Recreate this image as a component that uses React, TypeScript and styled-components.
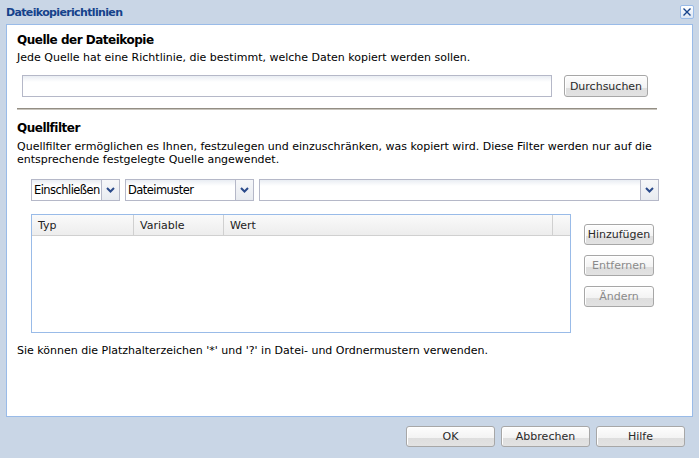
import React from 'react';
import styled, { createGlobalStyle } from 'styled-components';

const GlobalStyle = createGlobalStyle`
  html, body {
    margin: 0;
    padding: 0;
  }
  body {
    font-family: "DejaVu Sans", Tahoma, sans-serif;
    font-size: 11px;
    color: #000;
  }
`;

const Window = styled.div`
  width: 699px;
  height: 458px;
  background: #c9d6e6;
  display: flex;
  flex-direction: column;
  box-sizing: border-box;
  overflow: hidden;
`;

const TitleBar = styled.div`
  height: 24px;
  display: flex;
  align-items: center;
  justify-content: space-between;
  padding: 0 5px 0 6px;
  flex-shrink: 0;
`;

const Title = styled.span`
  font-weight: bold;
  font-size: 11px;
  letter-spacing: -0.65px;
  color: #15428b;
`;

const CloseButton = styled.div`
  width: 14px;
  height: 14px;
  box-sizing: border-box;
  border: 1px solid #99bbe8;
  border-radius: 2px;
  background: linear-gradient(#ffffff, #dbe5f3);
  display: flex;
  align-items: center;
  justify-content: center;
`;

const Panel = styled.div`
  margin: 0 6px;
  height: 393px;
  box-sizing: border-box;
  flex-shrink: 0;
  border: 1px solid #99bbe8;
  background: #fff;
  padding: 7px 10px 0 10px;
`;

const Heading = styled.div<{ $top?: number }>`
  font-size: 12px;
  font-weight: bold;
  letter-spacing: -0.5px;
  line-height: 16px;
  margin-top: ${p => p.$top ?? 0}px;
`;

const Text = styled.p<{ $top?: number; $lh?: number }>`
  margin: ${p => p.$top ?? 0}px 0 0 0;
  line-height: ${p => p.$lh ?? 14}px;
`;

const SourceRow = styled.div`
  display: flex;
  align-items: center;
  gap: 12px;
  margin-top: 10px;
  padding-left: 5px;
`;

const TextField = styled.input<{ $width: number }>`
  width: ${p => p.$width}px;
  height: 22px;
  box-sizing: border-box;
  border: 1px solid #b5b8c8;
  background: linear-gradient(#e9edf3, #ffffff 6px);
  margin: 0;
  padding: 0 3px;
  font: inherit;
  outline: none;
`;

const Button = styled.button<{ $width: number; $height?: number }>`
  width: ${p => p.$width}px;
  height: ${p => p.$height ?? 21}px;
  box-sizing: border-box;
  border: 1px solid #a7a7a7;
  border-radius: 3px;
  background: linear-gradient(#fdfdfd 0%, #f3f3f3 58%, #dedede 60%, #e2e2e2 100%);
  font-family: "DejaVu Sans", Tahoma, sans-serif;
  font-size: 11px;
  font-weight: normal;
  color: #2a2a2a;
  padding: 0;
  margin: 0;
  box-shadow: inset 1px 1px 0 #ffffff;

  &:disabled {
    color: #8a8a8a;
  }
`;

const Divider = styled.div`
  width: 640px;
  height: 2px;
  margin-top: 11px;
  border-top: 1px solid #938e84;
  border-bottom: 1px solid #c8c4bc;
  box-sizing: border-box;
`;

const FilterRow = styled.div`
  display: flex;
  gap: 5px;
  margin-top: 13px;
  padding-left: 14px;
`;

const Combo = styled.div<{ $width: number }>`
  width: ${p => p.$width}px;
  height: 22px;
  display: flex;
  box-sizing: border-box;
`;

const ComboValue = styled.div`
  flex: 1;
  min-width: 0;
  border: 1px solid #b5b8c8;
  border-right: none;
  background: linear-gradient(#e9edf3, #ffffff 6px);
  display: flex;
  align-items: center;
  padding-left: 2px;
  font-size: 11.5px;
  letter-spacing: -0.55px;
  white-space: nowrap;
  overflow: hidden;
`;

const Trigger = styled.div`
  width: 17px;
  flex-shrink: 0;
  border: 1px solid #b5b8c8;
  background: linear-gradient(#f6f7f9, #e8ebf0);
  display: flex;
  align-items: center;
  justify-content: center;
`;

const TableRow = styled.div`
  display: flex;
  align-items: flex-start;
  margin-top: 13px;
  padding-left: 14px;
`;

const Grid = styled.div`
  width: 540px;
  height: 119px;
  box-sizing: border-box;
  border: 1px solid #99bbe8;
`;

const GridHeader = styled.div`
  display: flex;
  height: 21px;
  box-sizing: border-box;
  border-bottom: 1px solid #d0d0d0;
  background: linear-gradient(#fafafa, #ededed);
`;

const HeaderCell = styled.div<{ $width?: number }>`
  width: ${p => (p.$width ? `${p.$width}px` : 'auto')};
  flex: ${p => (p.$width ? 'none' : 1)};
  box-sizing: border-box;
  border-right: 1px solid #d0d0d0;
  padding-left: 6px;
  display: flex;
  align-items: center;
  color: #222;
  &:last-child {
    border-right: none;
  }
`;

const SideButtons = styled.div`
  display: flex;
  flex-direction: column;
  gap: 10px;
  margin-left: 13px;
  padding-top: 10px;
`;

const Footer = styled.div`
  flex: 1;
  display: flex;
  justify-content: flex-end;
  align-items: flex-start;
  gap: 6px;
  padding: 9px 14px 0 0;
`;

const Chevron = () => (
  <svg width="9" height="6" viewBox="0 0 9 6">
    <polyline points="1,1 4.5,4.5 8,1" fill="none" stroke="#2a4a8a" strokeWidth="2" />
  </svg>
);

const Select: React.FC<{ width: number; value?: string }> = ({ width, value }) => (
  <Combo $width={width}>
    <ComboValue>{value}</ComboValue>
    <Trigger>
      <Chevron />
    </Trigger>
  </Combo>
);

const App: React.FC = () => {
  return (
    <>
      <GlobalStyle />
      <Window>
        <TitleBar>
          <Title>Dateikopierichtlinien</Title>
          <CloseButton>
            <svg width="10" height="10" viewBox="0 0 10 10">
              <path d="M1.5 1.5 L8.5 8.5 M8.5 1.5 L1.5 8.5" stroke="#15428b" strokeWidth="1.4" />
            </svg>
          </CloseButton>
        </TitleBar>

        <Panel>
          <Heading>Quelle der Dateikopie</Heading>
          <Text $top={3}>Jede Quelle hat eine Richtlinie, die bestimmt, welche Daten kopiert werden sollen.</Text>
          <SourceRow>
            <TextField $width={530} readOnly />
            <Button $width={84} $height={22}>Durchsuchen</Button>
          </SourceRow>
          <Divider />

          <Heading $top={10}>Quellfilter</Heading>
          <Text $top={4} $lh={13}>
            Quellfilter ermöglichen es Ihnen, festzulegen und einzuschränken, was kopiert wird. Diese Filter werden nur auf die
            <br />
            entsprechende festgelegte Quelle angewendet.
          </Text>

          <FilterRow>
            <Select width={89} value="Einschließen" />
            <Select width={129} value="Dateimuster" />
            <Select width={400} />
          </FilterRow>

          <TableRow>
            <Grid>
              <GridHeader>
                <HeaderCell $width={102}>Typ</HeaderCell>
                <HeaderCell $width={90}>Variable</HeaderCell>
                <HeaderCell>Wert</HeaderCell>
                <HeaderCell $width={17} />
              </GridHeader>
            </Grid>
            <SideButtons>
              <Button $width={70}>Hinzufügen</Button>
              <Button $width={70} disabled>Entfernen</Button>
              <Button $width={70} disabled>Ändern</Button>
            </SideButtons>
          </TableRow>

          <Text $top={11}>Sie können die Platzhalterzeichen '*' und '?' in Datei- und Ordnermustern verwenden.</Text>
        </Panel>

        <Footer>
          <Button $width={89}>OK</Button>
          <Button $width={89}>Abbrechen</Button>
          <Button $width={89}>Hilfe</Button>
        </Footer>
      </Window>
    </>
  );
};

export default App;
